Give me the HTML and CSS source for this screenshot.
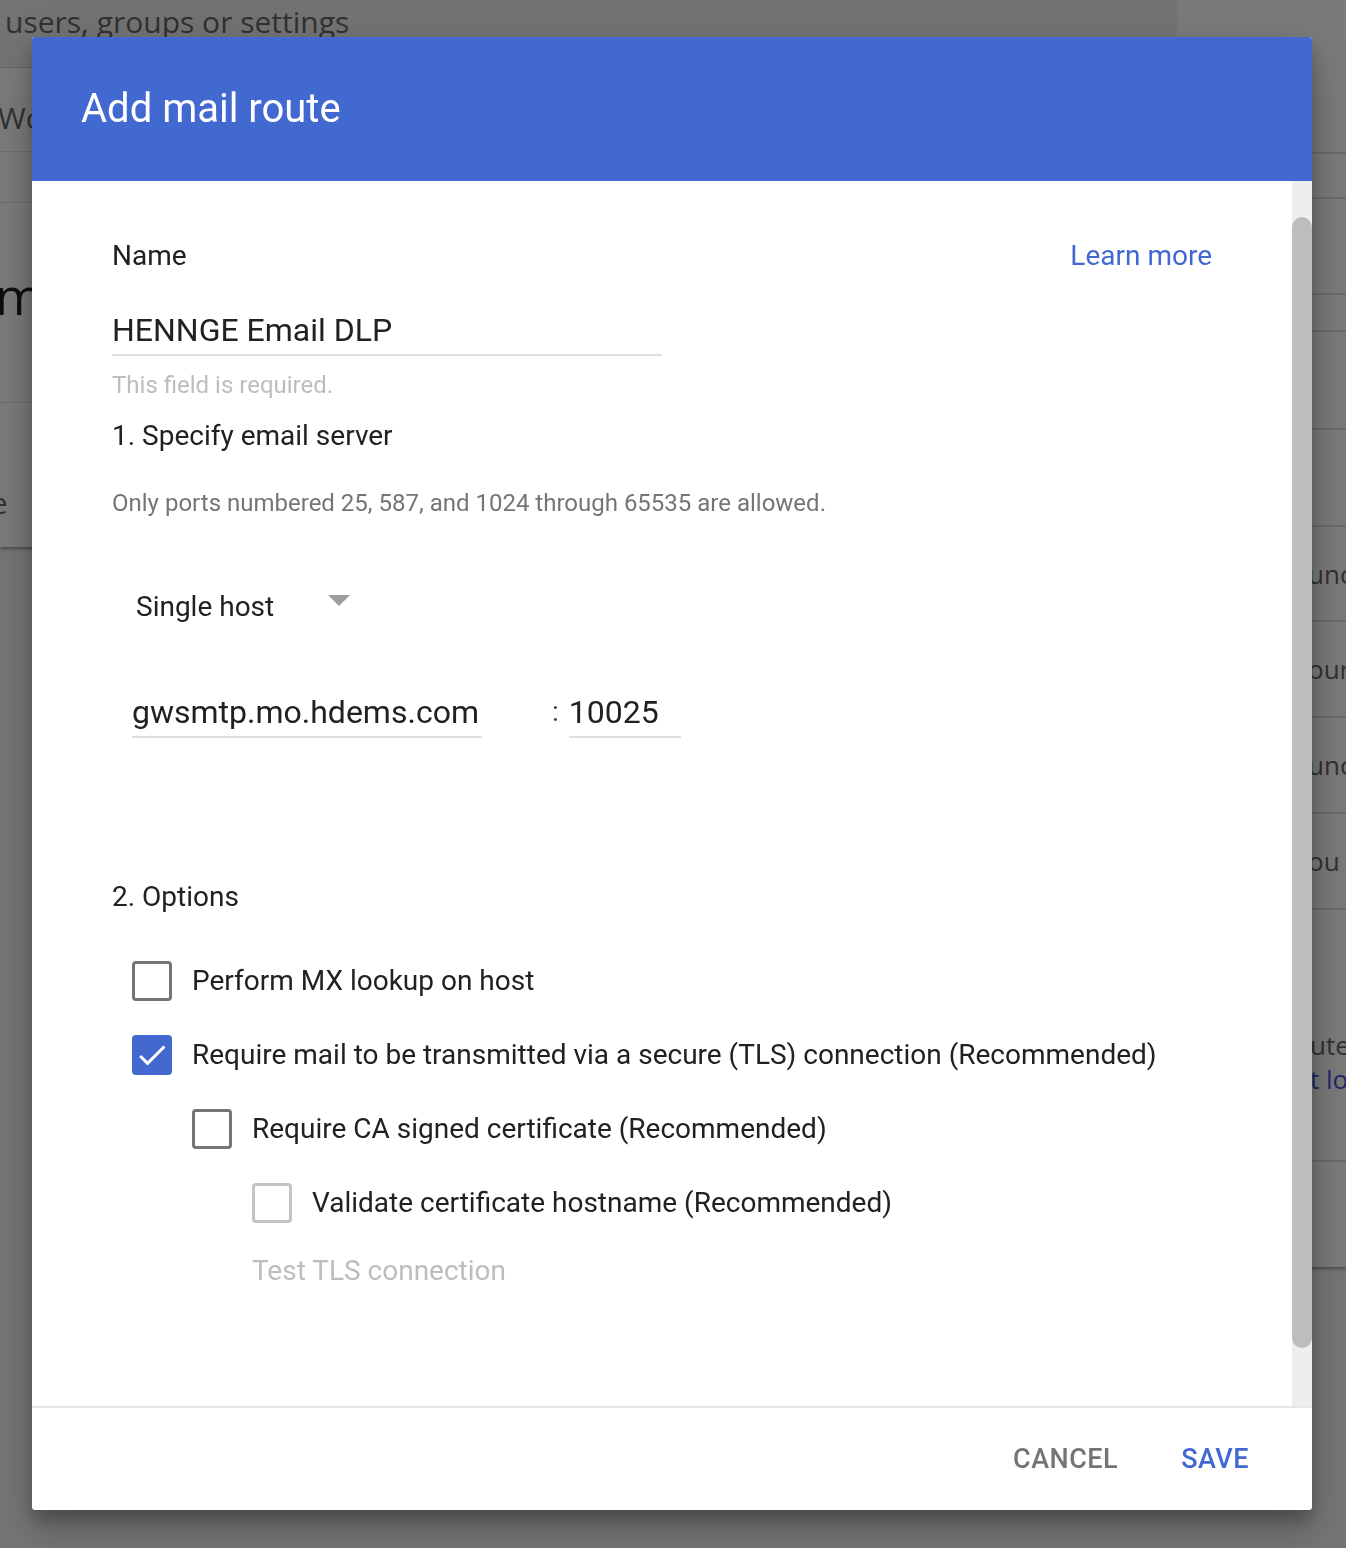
FILE: index.html
```html
<!DOCTYPE html>
<html>

<head>
    <title>Add mail route</title>
    <link rel="stylesheet" href="styles.css">
</head>

<body>
    <!-- admin page behind the dialog -->
    <div class="page">
        <div class="main">
            <div class="search">users, groups or settings</div>
            <div class="card">
                <div class="row row-tall">Workspace</div>
                <div class="row row-short"></div>
                <div class="row row-big"><span class="cut">mail</span></div>
                <div class="row row-last"><span class="cut-small">Route</span></div>
            </div>
        </div>
        <div class="side">
            <div class="side-top"></div>
            <div class="side-card">
                <div class="side-row r45"></div>
                <div class="side-row r96"></div>
                <div class="side-row r37"></div>
                <div class="side-row r98"></div>
                <div class="side-row r97"></div>
                <div class="side-row r95">unc</div>
                <div class="side-row r96">our</div>
                <div class="side-row r96">unc</div>
                <div class="side-row r96">ou</div>
                <div class="side-row r252">
                    <span>utes</span>
                    <span class="side-link">t log</span>
                </div>
                <div class="side-row r107"></div>
            </div>
        </div>
    </div>

    <div class="scrim"></div>

    <div class="dialog">
        <div class="dialog-header">Add mail route</div>

        <div class="dialog-body">
            <div class="dialog-content">
                <div class="name-head">
                    <span class="label">Name</span>
                    <a class="learn-more" href="#">Learn more</a>
                </div>
                <div class="field name-field">HENNGE Email DLP</div>
                <div class="helper">This field is required.</div>

                <div class="section-title">1. Specify email server</div>
                <div class="note">Only ports numbered 25, 587, and 1024 through 65535 are allowed.</div>

                <div class="select">
                    <span>Single host</span>
                    <span class="caret"></span>
                </div>

                <div class="host-row">
                    <div class="field host-field">gwsmtp.mo.hdems.com</div>
                    <span class="colon">:</span>
                    <div class="field port-field">10025</div>
                </div>

                <div class="section-title options-title">2. Options</div>

                <div class="check-row">
                    <span class="box"></span>
                    <span class="check-label">Perform MX lookup on host</span>
                </div>
                <div class="check-row">
                    <span class="box checked">
                        <svg viewBox="0 0 24 24" width="36" height="36">
                            <path fill="#fff" d="M9 16.17L4.83 12l-1.42 1.41L9 19 21 7l-1.41-1.41z" />
                        </svg>
                    </span>
                    <span class="check-label">Require mail to be transmitted via a secure (TLS) connection (Recommended)</span>
                </div>
                <div class="check-row indent-1">
                    <span class="box"></span>
                    <span class="check-label">Require CA signed certificate (Recommended)</span>
                </div>
                <div class="check-row indent-2">
                    <span class="box disabled"></span>
                    <span class="check-label">Validate certificate hostname (Recommended)</span>
                </div>
                <div class="test-tls indent-2">Test TLS connection</div>
            </div>
            <div class="scrollbar">
                <div class="thumb"></div>
            </div>
        </div>

        <div class="dialog-footer">
            <button class="btn btn-cancel">CANCEL</button>
            <button class="btn btn-save">SAVE</button>
        </div>
    </div>
</body>

</html>
```

FILE: styles.css
```css
* {
    box-sizing: border-box;
}

body {
    margin: 0;
    width: 1346px;
    height: 1548px;
    overflow: hidden;
    font-family: Roboto, "Noto Sans", Arial, sans-serif;
    background-color: #f4f4f4;
}

/* ---------- page underneath ---------- */

.page {
    display: flex;
    height: 1548px;
    font-family: "Open Sans", Arial, sans-serif;
    color: #686868;
}

.main {
    width: 1177px;
    flex-shrink: 0;
}

.search {
    height: 68px;
    padding-left: 5px;
    font-size: 30px;
    line-height: 44px;
    background-color: #f1f1f1;
    border-bottom: 1px solid #d8d8d8;
    white-space: nowrap;
}

.card {
    background-color: #ffffff;
    box-shadow: 0 2px 3px rgba(0, 0, 0, 0.35);
}

.row {
    border-bottom: 1px solid #e0e0e0;
    overflow: hidden;
    white-space: nowrap;
}

.row-tall {
    height: 84px;
    font-size: 30px;
    line-height: 100px;
    text-indent: -2px;
}

.row-short {
    height: 51px;
}

.row-big {
    height: 200px;
    font-size: 52px;
    line-height: 184px;
    color: #1e1e1e;
}

.row-big .cut {
    margin-left: -5px;
}

.row-last {
    height: 144px;
    border-bottom: none;
    font-size: 30px;
    line-height: 200px;
}

.row-last .cut-small {
    margin-left: -75px;
}

.side {
    flex: 1;
    min-width: 0;
}

.side-top {
    height: 152px;
    background-color: #ffffff;
}

.side-card {
    background-color: #ffffff;
    box-shadow: 0 2px 3px rgba(0, 0, 0, 0.35);
}

.side-row {
    border-top: 2px solid #dedede;
    padding-left: 131px;
    font-size: 26px;
    white-space: nowrap;
    overflow: hidden;
    display: flex;
    flex-direction: column;
    justify-content: center;
}

.r45 { height: 45px; }
.r96 { height: 96px; }
.r37 { height: 37px; }
.r98 { height: 98px; }
.r97 { height: 97px; }
.r95 { height: 95px; }
.r107 { height: 107px; }

.r252 {
    height: 252px;
    justify-content: flex-start;
    padding-top: 118px;
    padding-left: 133px;
    line-height: 34px;
}

.side-link {
    color: #3a58d8;
}

.scrim {
    position: fixed;
    inset: 0;
    background-color: rgba(0, 0, 0, 0.52);
}

/* ---------- dialog ---------- */

.dialog {
    position: absolute;
    left: 32px;
    top: 37px;
    width: 1280px;
    height: 1473px;
    display: flex;
    flex-direction: column;
    background-color: #ffffff;
    border-radius: 3px;
    box-shadow: 0 24px 38px rgba(0, 0, 0, 0.14), 0 9px 46px rgba(0, 0, 0, 0.12), 0 11px 15px rgba(0, 0, 0, 0.2);
    color: #212121;
}

.dialog-header {
    height: 144px;
    flex-shrink: 0;
    padding-left: 49px;
    background-color: #4169d0;
    border-radius: 3px 3px 0 0;
    color: #ffffff;
    font-size: 40px;
    line-height: 144px;
}

.dialog-body {
    flex: 1;
    display: flex;
    min-height: 0;
}

.dialog-content {
    flex: 1;
    padding: 57px 80px 0 80px;
}

.scrollbar {
    width: 20px;
    background-color: #eeeeee;
}

.thumb {
    margin-top: 36px;
    height: 1131px;
    background-color: #bdbdbd;
    border-radius: 10px;
}

.name-head {
    display: flex;
    justify-content: space-between;
    font-size: 28px;
    line-height: 36px;
}

.learn-more {
    color: #4169d0;
    text-decoration: none;
}

.field {
    font-size: 32px;
    line-height: 40px;
    padding-bottom: 4px;
    border-bottom: 2px solid #e0e0e0;
    color: #212121;
}

.name-field {
    width: 550px;
    margin-top: 36px;
}

.helper {
    margin-top: 14px;
    font-size: 24px;
    line-height: 30px;
    color: #bdbdbd;
}

.section-title {
    margin-top: 18px;
    font-size: 28px;
    line-height: 36px;
}

.note {
    margin-top: 34px;
    font-size: 24px;
    line-height: 30px;
    color: #757575;
}

.select {
    display: flex;
    align-items: flex-start;
    margin-top: 71px;
    padding-left: 24px;
    font-size: 28px;
    line-height: 36px;
}

.caret {
    margin: 6px 0 0 54px;
    border-left: 11px solid transparent;
    border-right: 11px solid transparent;
    border-top: 11px solid #9e9e9e;
}

.host-row {
    display: flex;
    align-items: flex-start;
    margin-top: 67px;
    padding-left: 20px;
}

.host-field {
    width: 350px;
}

.colon {
    margin: 0 10px 0 70px;
    font-size: 28px;
    line-height: 40px;
    color: #424242;
}

.port-field {
    width: 112px;
}

.options-title {
    margin-top: 141px;
}

.check-row {
    display: flex;
    align-items: center;
    margin-top: 34px;
    padding-left: 20px;
}

.options-title + .check-row {
    margin-top: 46px;
}

.indent-1 {
    padding-left: 80px;
}

.indent-2 {
    padding-left: 140px;
}

.box {
    width: 40px;
    height: 40px;
    flex-shrink: 0;
    display: flex;
    align-items: center;
    justify-content: center;
    border: 3px solid #757575;
    border-radius: 4px;
}

.box.checked {
    border: none;
    background-color: #4169d0;
}

.box.disabled {
    border-color: #c4c4c4;
}

.check-label {
    margin-left: 20px;
    font-size: 28px;
    line-height: 40px;
}

.test-tls {
    margin-top: 29px;
    font-size: 28px;
    line-height: 38px;
    color: #bdbdbd;
}

.dialog-footer {
    height: 104px;
    flex-shrink: 0;
    display: flex;
    justify-content: flex-end;
    align-items: center;
    gap: 63px;
    padding-right: 63px;
    border-top: 2px solid #e6e6e6;
}

.btn {
    padding: 0;
    border: none;
    background: none;
    font-family: Roboto, Arial, sans-serif;
    font-size: 27px;
    font-weight: 500;
    letter-spacing: 0.5px;
    cursor: pointer;
}

.btn-cancel {
    color: #757575;
}

.btn-save {
    color: #4169d0;
}
```
